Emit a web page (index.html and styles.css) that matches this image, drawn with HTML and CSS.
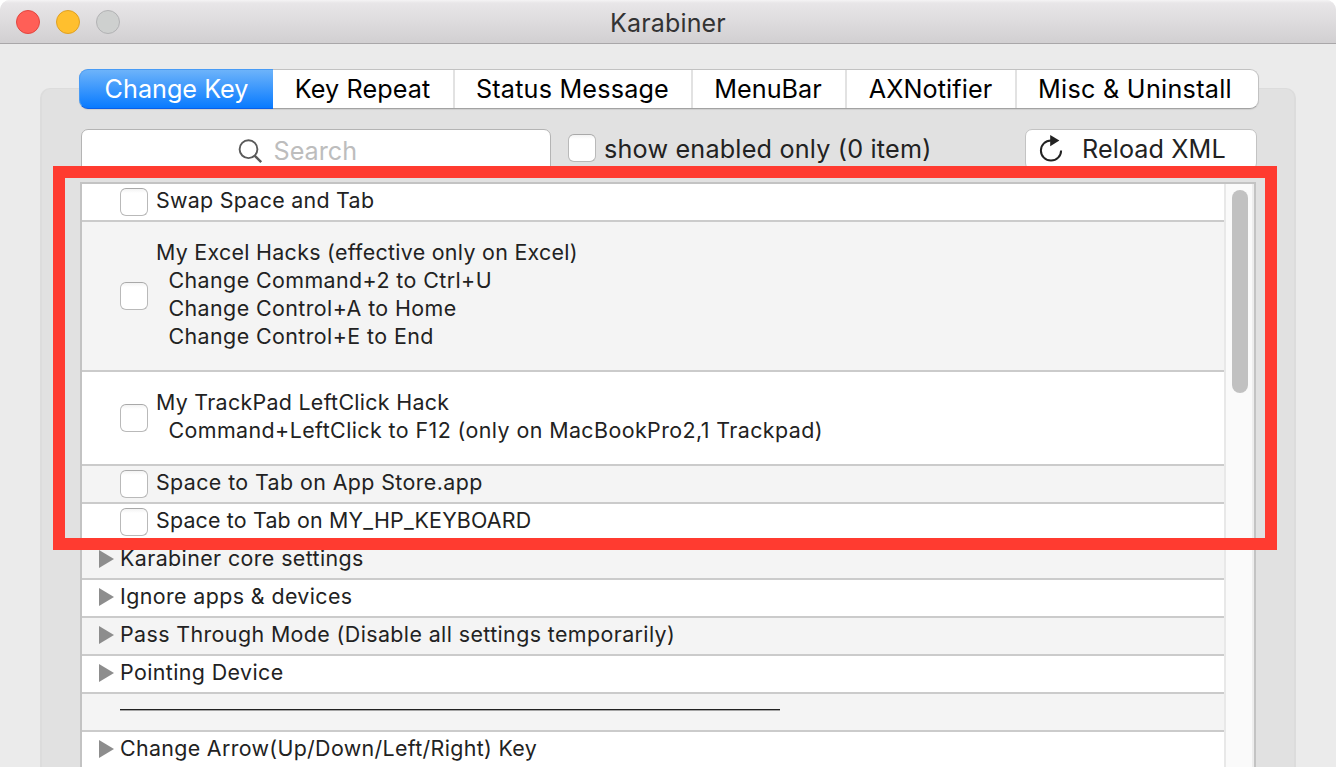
FILE: index.html
```html
<!DOCTYPE html>
<html lang="en">
<head>
<meta charset="utf-8">
<title>Karabiner</title>
<link rel="stylesheet" href="styles.css">
</head>
<body>
<div class="window">
  <header class="titlebar">
    <div class="lights"><span class="light close"></span><span class="light minimize"></span><span class="light zoom"></span></div>
    <h1 class="title"><span class="t-title">Karabiner</span></h1>
  </header>
  <main class="content">
    <section class="panel">
      <nav class="tabs">
        <span class="tab active">Change Key</span>
        <span class="tab repeat">Key Repeat</span>
        <span class="tab status">Status Message</span>
        <span class="tab menubar">MenuBar</span>
        <span class="tab notifier">AXNotifier</span>
        <span class="tab misc">Misc &amp; Uninstall</span>
      </nav>
      <div class="toolbar">
        <div class="search">
          <svg class="search-icon" width="26" height="26" viewBox="0 0 26 26"><circle cx="10.5" cy="10.2" r="8.9" fill="none" stroke="#5a5a5a" stroke-width="1.9"/><path d="M16.6 16.6L23.2 23.2" stroke="#5a5a5a" stroke-width="2.4"/></svg>
          <span>Search</span>
        </div>
        <span class="checkbox"></span>
        <span class="filter-label">show enabled only (0 item)</span>
        <div class="reload">
          <svg class="reload-icon" width="24" height="28" viewBox="0 0 24 28"><path d="M13.5 5.4H12A10.1 10.1 0 1 0 22.1 15.5" fill="none" stroke="#222" stroke-width="2"/><path d="M11.2 0L20.4 5.6L11.2 11.2Z" fill="#222"/></svg>
          <span>Reload XML</span>
        </div>
      </div>
      <div class="list">
        <div class="rows">
          <div class="row"><span class="checkbox"></span><span class="label t-swap">Swap Space and Tab</span></div>
          <div class="row tall excel"><span class="checkbox"></span><div class="label"><div class="t-e1">My Excel Hacks (effective only on Excel)</div><div class="sub">Change Command+2 to Ctrl+U</div><div class="sub">Change Control+A to Home</div><div class="sub">Change Control+E to End</div></div></div>
          <div class="row tall trackpad"><span class="checkbox"></span><div class="label"><div class="t-p1">My TrackPad LeftClick Hack</div><div class="sub">Command+LeftClick to F12 (only on MacBookPro2,1 Trackpad)</div></div></div>
          <div class="row"><span class="checkbox"></span><span class="label">Space to Tab on App Store.app</span></div>
          <div class="row"><span class="checkbox"></span><span class="label t-hp">Space to Tab on MY_HP_KEYBOARD</span></div>
          <div class="row group"><span class="arrow"></span><span class="label">Karabiner core settings</span></div>
          <div class="row group"><span class="arrow"></span><span class="label">Ignore apps &amp; devices</span></div>
          <div class="row group"><span class="arrow"></span><span class="label">Pass Through Mode (Disable all settings temporarily)</span></div>
          <div class="row group"><span class="arrow"></span><span class="label">Pointing Device</span></div>
          <div class="row group"><span class="rule"></span></div>
          <div class="row group"><span class="arrow"></span><span class="label t-arrow">Change Arrow(Up/Down/Left/Right) Key</span></div>
        </div>
        <div class="scrollbar"><span class="thumb"></span></div>
      </div>
    </section>
  </main>
  <div class="highlight"></div>
</div>
</body>
</html>
```
FILE: styles.css
```css
* { box-sizing: border-box; }
body { margin: 0; overflow: hidden; background: #fff; font-family: Inter, "Liberation Sans", sans-serif; color: #222; }
.window { position: relative; width: 1336px; height: 767px; overflow: hidden; background: #ebebeb; border-radius: 10px 10px 0 0; }

.titlebar { position: relative; display: flex; align-items: center; height: 44px; background: linear-gradient(#f5f4f5 0, #e8e6e8 3px, #d2d0d2 42px); border-bottom: 1px solid #a9a7a9; }
.lights { display: flex; gap: 16px; padding-left: 16px; padding-top: 1px; }
.light { width: 24px; height: 24px; border-radius: 50%; border: 1px solid; }
.close { background: #ff5f57; border-color: #e2463f; }
.minimize { background: #ffbf2e; border-color: #dfa023; }
.zoom { background: #ced0cf; border-color: #b2b2b4; }
.title { position: absolute; inset: 0; margin: 0; text-align: center; font-size: 25px; font-weight: 420; line-height: 46px; color: #333; }
.t-title { letter-spacing: 0.15px; }

.content { padding: 44px 40px 0; }
.panel { height: 700px; border: 2px solid #dcdcdc; border-top-width: 1px; border-radius: 10px; background: #e1e1e1; padding: 0 38px; }
.tabs { display: flex; width: 1180px; height: 40px; margin: -20px 0 0 -1px; border: 1px solid #c2c2c2; border-bottom-color: #a3a3a3; border-radius: 9px; background: #fff; box-shadow: 0 1px 1px #cfcfcf; font-size: 25.2px; font-weight: 430; color: #000; }
.tab { display: flex; align-items: center; justify-content: center; border-right: 2px solid #e2e2e2; white-space: nowrap; }
.tab.active { width: 194px; margin: -1px 0 -1px -1px; background: linear-gradient(#6db3fa, #087aff); border: 1px solid #489bf5; border-bottom-color: #0a5fe8; border-right: 0; border-radius: 9px 0 0 9px; color: #fff; font-weight: 400; }
.repeat { width: 182px; padding-right: 1px; letter-spacing: 0.1px; }
.status { width: 238px; padding-right: 1px; letter-spacing: 0.18px; }
.menubar { width: 154px; padding-right: 2px; letter-spacing: 0; }
.notifier { width: 170px; padding-right: 1px; letter-spacing: 0.1px; }
.misc { flex: 1; border-right: 0; padding-right: 5px; letter-spacing: 0.28px; }

.toolbar { display: flex; align-items: flex-start; width: 1178px; height: 53px; padding: 0 0 0 1px; margin-top: 20px; font-size: 25.2px; font-weight: 400; }
.search { display: flex; flex: none; width: 470px; height: 44px; padding: 0 0 0 156px; border: 1px solid #b4b4b4; border-radius: 7px; background: #fff; color: #bdbdbd; line-height: 42px; }
.search-icon { margin: 9px 9.5px 0 0; flex: none; }
.checkbox { display: block; flex: none; width: 28px; height: 28px; border: 1px solid #b9b9b9; border-top-color: #a9a9a9; border-radius: 6px; background: linear-gradient(#f3f3f3 0, #fff 4px); }
.toolbar .checkbox { margin: 5px 8px 0 17px; }
.filter-label { flex: none; width: 421px; line-height: 41px; white-space: nowrap; letter-spacing: 0.19px; }
.reload { display: flex; flex: none; width: 232px; height: 41px; padding-left: 12px; border: 1px solid #c3c3c3; border-radius: 7px; background: #fff; line-height: 39px; white-space: nowrap; letter-spacing: 0.1px; }
.reload-icon { flex: none; margin: 5px 19px 0 1px; }

.list { display: flex; width: 1176px; height: 600px; border: 2px solid #c3c3c3; background: #fff; overflow: hidden; }
.rows { flex: 1; }
.row { display: flex; height: 38px; padding-left: 38px; border-bottom: 2px solid #cbcbcb; font-size: 21.4px; font-weight: 430; line-height: 28px; letter-spacing: 0.4px; white-space: nowrap; }
.row:nth-child(even) { background: #f4f4f4; }
.row .checkbox { margin: 4px 8px 0 0; }
.label { padding-top: 2px; }
.sub { padding-left: 12.5px; letter-spacing: 0.42px; }
.t-swap { letter-spacing: 0.28px; }
.t-e1, .t-p1 { letter-spacing: 0.3px; }
.t-hp { letter-spacing: 0.18px; }
.t-arrow { letter-spacing: 0.33px; }
.excel { height: 150px; }
.trackpad { height: 94px; }
.tall .label { padding-top: 16px; }
.excel .checkbox { margin-top: 60px; }
.trackpad .checkbox { margin-top: 32px; }
.group { padding-left: 17px; }
.arrow { flex: none; width: 15px; height: 18px; margin: 8px 6px 0 0; background: #8d8d8d; clip-path: polygon(0 0, 100% 50%, 0 100%); }
.rule { width: 660px; height: 2px; margin: 15px 0 0 21px; border-top: 1px solid #222; border-bottom: 1px solid #a5a5a5; }
.scrollbar { width: 30px; padding: 6px 4px 0 6px; background: #fafafa; border-left: 2px solid #e8e8e8; border-right: 2px solid #ededed; }
.thumb { display: block; width: 16px; height: 203px; border-radius: 8px; background: #c1c1c1; }

.highlight { position: absolute; left: 53px; top: 166px; width: 1224px; height: 384px; border: 12px solid #ff3b30; }
```
